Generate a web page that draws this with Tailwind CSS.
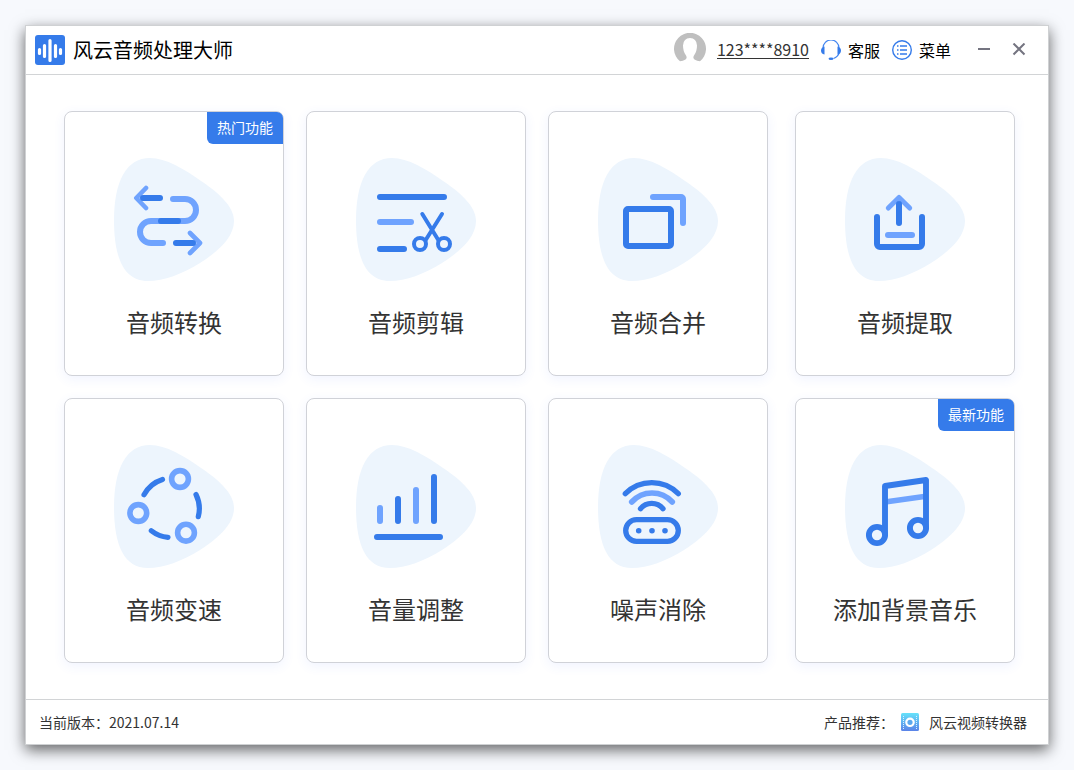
<!DOCTYPE html>
<html lang="zh-CN">
<head>
<meta charset="utf-8">
<meta name="viewport" content="width=device-width, initial-scale=1">
<title>风云音频处理大师</title>
<script src="https://cdn.jsdelivr.net/npm/@tailwindcss/browser@4"></script>
</head>
<body class="flex min-h-screen bg-[#f7f9fd] p-[25px] font-['Noto_Sans_CJK_SC',sans-serif] text-[#333]">
<svg class="hidden" aria-hidden="true">
  <symbol id="blob" viewBox="0 0 120 124"><path fill="#edf5fd" d="M0 62C0 24 12 0 36 0C52 0 70 11 87 23C108 37 120 50 120 63C120 80 103 94 86 105C68 116 50 123 34 123C10 123 0 100 0 62Z"/></symbol>
</svg>
<div class="flex w-full flex-col border border-[#cfd1d3] bg-white shadow-[0_5px_14px_rgba(0,0,0,0.6)]">
  <header class="flex h-[49px] shrink-0 items-center border-b border-[#d2d4d6] pl-[9px] pr-[19px] text-base text-black">
    <svg class="size-[30px]" viewBox="0 0 30 30" aria-hidden="true"><rect width="30" height="30" rx="3" fill="#357bea"/><path d="M4.500 14.500v4M9.500 10.500v11M15 5.500v20M20.500 10.500v11M25.500 14.500v4" stroke="#fff" stroke-width="3.200" stroke-linecap="round"/></svg>
    <h1 class="ml-2 text-xl leading-6">风云音频处理大师</h1>
    <div class="ml-auto flex items-center">
      <div class="flex items-center pb-[2px]">
        <svg class="size-8" viewBox="0 0 32 32" aria-hidden="true"><path fill="#bfbfbf" d="M6 28.300A16 16 0 1 1 26 28.300Q23 28 20.500 26.500Q18.500 25 20 22.500Q23 18.500 23 12.500Q22.500 5 16 5Q9.500 5 9 12.500Q9 18.500 12 22.500Q13.500 25 11.500 26.500Q9 28 6 28.300Z"/></svg>
        <a href="#" class="ml-[11px] border-b border-[#333] leading-[18px] text-[#333]">123****8910</a>
      </div>
      <button class="ml-3 flex items-center gap-[7px]">
        <svg class="size-5" viewBox="0 0 20 20" fill="none" aria-hidden="true"><path d="M2 8A8 8 0 0 1 18 8M18.500 12Q17 17 12.500 18.500" stroke="#4285f0" stroke-width="1.200"/><path d="M3.500 6.500v8Q0 14 0 10.500Q0 7.500 3.500 6.500ZM16.500 6.500v8Q20 14 20 10.500Q20 7.500 16.500 6.500Z" fill="#357bea"/><ellipse cx="10" cy="18.700" rx="2.500" ry="1.300" fill="#357bea"/></svg>
        <span>客服</span>
      </button>
      <button class="ml-3 flex items-center gap-[7px]">
        <svg class="size-5" viewBox="0 0 20 20" fill="none" stroke="#357bea" aria-hidden="true"><circle cx="10" cy="10" r="9.300" stroke-width="1.400"/><path d="M5 6h1.500M5 10h1.500M5 14h1.500M8 6h7M8 10h7M8 14h7" stroke-width="1.600"/></svg>
        <span>菜单</span>
      </button>
      <button class="ml-6 p-[3px]" aria-label="最小化"><svg class="h-[14px] w-3" viewBox="0 0 12 14"><path d="M0 6h12" stroke="#747480" stroke-width="2"/></svg></button>
      <button class="ml-4 p-[3px]" aria-label="关闭"><svg class="size-[14px]" viewBox="0 0 14 14"><path d="M1.500 0.500l11 11M12.500 0.500l-11 11" stroke="#747480" stroke-width="2"/></svg></button>
    </div>
  </header>

  <main class="grid flex-1 grid-cols-[220fr_220fr_220fr_225fr] content-start gap-[22px] pb-9 pl-[38px] pr-[33px] pt-9 text-2xl">
    <button class="relative flex h-[265px] flex-col items-center rounded-lg border border-[#d0d2d8] bg-white pt-[46px] shadow-[0_3px_12px_rgba(60,100,255,0.08)]">
      <span class="absolute right-0 top-0 h-8 rounded-bl-md rounded-tr-md bg-[#357bea] px-[10px] text-sm leading-[31px] text-white">热门功能</span>
      <svg class="h-[124px] w-[120px]" viewBox="0 0 120 124" fill="none" stroke-linecap="round" stroke-linejoin="round" aria-hidden="true"><use href="#blob"/>
        <g stroke="#6fa3fe"><path d="M32 30L22.300 40L32 50M76 75L86 85L76 95" stroke-width="4.600"/><path d="M59 41H71A11 11 0 0 1 71 63H37A11 11 0 0 0 37 85H49" stroke-width="6"/></g>
        <path d="M29 40H46M47 63H64M62 85H79" stroke="#357bea" stroke-width="6"/></svg>
      <span class="mt-6 leading-8">音频转换</span>
    </button>
    <button class="flex h-[265px] flex-col items-center rounded-lg border border-[#d0d2d8] bg-white pt-[46px] shadow-[0_3px_12px_rgba(60,100,255,0.08)]">
      <svg class="h-[124px] w-[120px]" viewBox="0 0 120 124" fill="none" stroke="#357bea" stroke-width="6" stroke-linecap="round" aria-hidden="true"><use href="#blob" stroke="none"/>
        <path d="M24 39H88M24 91H48"/><path d="M24 64H55" stroke="#6fa3fe"/>
        <g stroke-width="4"><path d="M66.300 56L82 81.500M86 56L70 81.500"/><circle cx="64" cy="86" r="6"/><circle cx="88" cy="86" r="6"/></g></svg>
      <span class="mt-6 leading-8">音频剪辑</span>
    </button>
    <button class="flex h-[265px] flex-col items-center rounded-lg border border-[#d0d2d8] bg-white pt-[46px] shadow-[0_3px_12px_rgba(60,100,255,0.08)]">
      <svg class="h-[124px] w-[120px]" viewBox="0 0 120 124" fill="none" aria-hidden="true"><use href="#blob"/>
        <path fill="#357bea" fill-rule="evenodd" d="M30 48H71A5 5 0 0 1 76 53V86A5 5 0 0 1 71 91H30A5 5 0 0 1 25 86V53A5 5 0 0 1 30 48ZM31 54V85H70V54Z"/>
        <path fill="#6fa3fe" d="M55 36H83A5 5 0 0 1 88 41V65A3 3 0 0 1 82 65V42H55A3 3 0 0 1 55 36Z"/></svg>
      <span class="mt-6 leading-8">音频合并</span>
    </button>
    <button class="ml-[5px] flex h-[265px] flex-col items-center rounded-lg border border-[#d0d2d8] bg-white pt-[46px] shadow-[0_3px_12px_rgba(60,100,255,0.08)]">
      <svg class="h-[124px] w-[120px]" viewBox="0 0 120 124" fill="none" stroke-linecap="round" stroke-linejoin="round" aria-hidden="true"><use href="#blob"/>
        <path d="M43.300 50L54 39.500L64.700 50" stroke="#6fa3fe" stroke-width="5"/><path d="M43 77H67" stroke="#6fa3fe" stroke-width="6"/>
        <path d="M54 46V65" stroke="#357bea" stroke-width="6"/><path fill="#357bea" d="M29 59A3 3 0 0 1 35 59V86H74V59A3 3 0 0 1 80 59V86A6 6 0 0 1 74 92H35A6 6 0 0 1 29 86Z"/></svg>
      <span class="mt-6 leading-8">音频提取</span>
    </button>
    <button class="flex h-[265px] flex-col items-center rounded-lg border border-[#d0d2d8] bg-white pt-[46px] shadow-[0_3px_12px_rgba(60,100,255,0.08)]">
      <svg class="h-[124px] w-[120px]" viewBox="0 0 120 124" fill="none" stroke-linecap="round" aria-hidden="true"><use href="#blob"/>
        <g stroke="#6fa3fe" stroke-width="5.600"><circle cx="66" cy="34" r="8.400"/><circle cx="24.300" cy="68" r="8.400"/><circle cx="72" cy="87.700" r="8.400"/></g>
        <path d="M30 49.700A32 32 0 0 1 48.500 34.500M82 49.500A32 32 0 0 1 84.300 71.700M37.300 85.700A32 32 0 0 0 54 92.300" stroke="#357bea" stroke-width="5.200"/></svg>
      <span class="mt-6 leading-8">音频变速</span>
    </button>
    <button class="flex h-[265px] flex-col items-center rounded-lg border border-[#d0d2d8] bg-white pt-[46px] shadow-[0_3px_12px_rgba(60,100,255,0.08)]">
      <svg class="h-[124px] w-[120px]" viewBox="0 0 120 124" fill="none" stroke-width="6" stroke-linecap="round" aria-hidden="true"><use href="#blob"/>
        <path d="M24 63V76M60 45V76" stroke="#6fa3fe"/><path d="M42 54V76M78 32V76M21 92H84" stroke="#357bea"/></svg>
      <span class="mt-6 leading-8">音量调整</span>
    </button>
    <button class="flex h-[265px] flex-col items-center rounded-lg border border-[#d0d2d8] bg-white pt-[46px] shadow-[0_3px_12px_rgba(60,100,255,0.08)]">
      <svg class="h-[124px] w-[120px]" viewBox="0 0 120 124" fill="none" stroke-linecap="round" aria-hidden="true"><use href="#blob"/>
        <path d="M33.700 57A27.400 27.400 0 0 1 74.300 57" stroke="#6fa3fe" stroke-width="5.600"/>
        <g stroke="#357bea" stroke-width="5.300"><path d="M27.300 48.700A37.400 37.400 0 0 1 80.300 48.700M42.500 63.700A14.600 14.600 0 0 1 65 63.700"/><rect x="27.700" y="74.700" width="52.600" height="21.600" rx="10.800"/></g>
        <g fill="#357bea"><circle cx="40.700" cy="85.700" r="2.800"/><circle cx="54" cy="85.700" r="2.800"/><circle cx="67" cy="85.700" r="2.800"/></g></svg>
      <span class="mt-6 leading-8">噪声消除</span>
    </button>
    <button class="relative ml-[5px] flex h-[265px] flex-col items-center rounded-lg border border-[#d0d2d8] bg-white pt-[46px] shadow-[0_3px_12px_rgba(60,100,255,0.08)]">
      <span class="absolute right-0 top-0 h-8 rounded-bl-md rounded-tr-md bg-[#357bea] px-[10px] text-sm leading-[31px] text-white">最新功能</span>
      <svg class="h-[124px] w-[120px]" viewBox="0 0 120 124" fill="none" stroke-linejoin="round" aria-hidden="true"><use href="#blob"/>
        <path d="M40 57L81 51.300" stroke="#6fa3fe" stroke-width="5.600"/>
        <g stroke="#357bea" stroke-width="5.900"><path d="M40 90V41L81 35V83"/><circle cx="32" cy="90" r="8.100"/><circle cx="73" cy="83" r="8.100"/></g></svg>
      <span class="mt-6 leading-8">添加背景音乐</span>
    </button>
  </main>

  <footer class="flex h-[45px] shrink-0 items-center border-t border-[#d2d4d6] pl-[13px] pr-[21px] text-sm">
    <p>当前版本：2021.07.14</p>
    <span class="ml-auto">产品推荐：</span>
    <a href="#" class="ml-[7px] flex items-center gap-[10px]">
      <svg class="size-[18px]" viewBox="0 0 18 18" aria-hidden="true"><defs><linearGradient id="film" x1="0" y1="0" x2="0" y2="1"><stop stop-color="#66e2fa"/><stop offset="1" stop-color="#5a83e8"/></linearGradient></defs><rect width="18" height="18" rx="1.500" fill="url(#film)"/><path d="M2.500 3v13M15.500 3v13" stroke="#d8f2ff" stroke-dasharray="1 1"/><circle cx="9" cy="9.300" r="3.700" fill="#5aa8ee" stroke="#fff" stroke-width="2.200"/></svg>
      <span>风云视频转换器</span>
    </a>
  </footer>
</div>
</body>
</html>
